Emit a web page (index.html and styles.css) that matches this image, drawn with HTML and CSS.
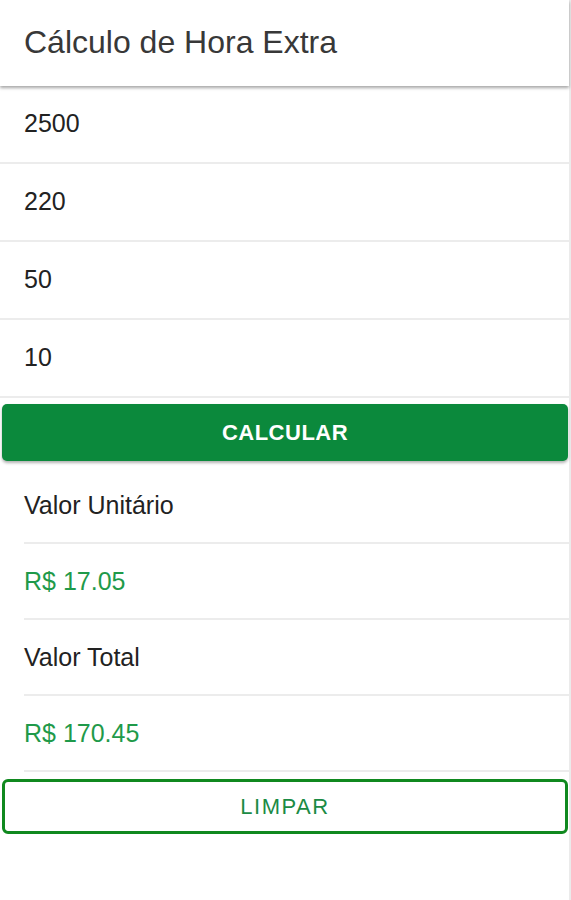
FILE: index.html
```html
<!DOCTYPE html>
<html lang="pt-BR">
<head>
  <meta charset="UTF-8">
  <title>Cálculo de Hora Extra</title>
  <link rel="stylesheet" href="styles.css">
</head>
<body>
<div class="app">
  <header class="toolbar">
    <h1>Cálculo de Hora Extra</h1>
  </header>

  <div class="input-list">
    <div class="input-item"><input type="number" id="salario" value="2500"></div>
    <div class="input-item"><input type="number" id="horasMes" value="220"></div>
    <div class="input-item"><input type="number" id="percentual" value="50"></div>
    <div class="input-item"><input type="number" id="horasExtras" value="10"></div>
  </div>

  <button class="btn btn-solid" onclick="calcularHoraExtra()">Calcular</button>

  <div class="result-list">
    <div class="result-item">Valor Unitário</div>
    <div class="result-item result-value" id="valorUnitario">R$ 17.05</div>
    <div class="result-item">Valor Total</div>
    <div class="result-item result-value" id="valorTotal">R$ 170.45</div>
  </div>

  <button class="btn btn-outline" onclick="limpar()">Limpar</button>
</div>

<script>
  function calcularHoraExtra() {
    const salario = parseFloat(document.getElementById('salario').value);
    const horasMes = parseFloat(document.getElementById('horasMes').value);
    const percentual = parseFloat(document.getElementById('percentual').value);
    const horasExtras = parseFloat(document.getElementById('horasExtras').value);

    if (isNaN(salario) || isNaN(horasMes) || isNaN(percentual) || isNaN(horasExtras) || horasMes === 0) {
      return;
    }

    const unitario = (salario / horasMes) * (1 + percentual / 100);
    const total = unitario * horasExtras;

    document.getElementById('valorUnitario').textContent = 'R$ ' + unitario.toFixed(2);
    document.getElementById('valorTotal').textContent = 'R$ ' + total.toFixed(2);
  }

  function limpar() {
    document.querySelectorAll('.input-item input').forEach(function (el) { el.value = ''; });
    document.getElementById('valorUnitario').textContent = '';
    document.getElementById('valorTotal').textContent = '';
  }
</script>
</body>
</html>
```

FILE: styles.css
```css
body {
  margin: 0;
  background-color: #ffffff;
  font-family: "Liberation Sans", Arial, sans-serif;
  color: #222222;
}

.app {
  width: 569px;
  min-height: 900px;
  border-right: 2px solid #ebebeb;
  box-sizing: content-box;
}

.toolbar {
  height: 86px;
  display: flex;
  align-items: center;
  padding-left: 24px;
  box-shadow: 0 2px 3px rgba(0, 0, 0, 0.35);
  position: relative;
  z-index: 1;
}

.toolbar h1 {
  margin: 0 0 2px;
  font-size: 32px;
  font-weight: 400;
  color: #383838;
}

.input-item {
  height: 76px;
  display: flex;
  align-items: center;
  border-bottom: 2px solid #ececec;
}

.input-item input {
  width: 100%;
  height: 100%;
  border: none;
  outline: none;
  padding: 0 0 2px 24px;
  background: transparent;
  font-family: inherit;
  font-size: 25px;
  color: #222222;
  box-sizing: border-box;
  -moz-appearance: textfield;
}

.input-item input::-webkit-outer-spin-button,
.input-item input::-webkit-inner-spin-button {
  -webkit-appearance: none;
  margin: 0;
}

.btn {
  display: block;
  width: 566px;
  margin: 0 2px;
  font-family: inherit;
  font-size: 22px;
  text-transform: uppercase;
  cursor: pointer;
  box-sizing: border-box;
}

.btn-solid {
  height: 57px;
  margin-top: 6px;
  margin-bottom: 7px;
  border: none;
  border-radius: 5px;
  background-color: #0b893c;
  color: #ffffff;
  font-weight: 700;
  letter-spacing: 0.5px;
  box-shadow: 0 2px 3px rgba(0, 0, 0, 0.3);
}

.btn-solid:active {
  background-color: #097832;
}

.btn-outline {
  height: 55px;
  margin-top: 7px;
  border: 3px solid #10891f;
  border-radius: 6px;
  background: #ffffff;
  color: #1b8b45;
  letter-spacing: 1.5px;
}

.result-item {
  height: 74px;
  margin-left: 24px;
  display: flex;
  align-items: center;
  font-size: 25px;
  color: #222222;
  border-bottom: 2px solid #ececec;
}

.result-value {
  color: #1f9a4a;
}
```
